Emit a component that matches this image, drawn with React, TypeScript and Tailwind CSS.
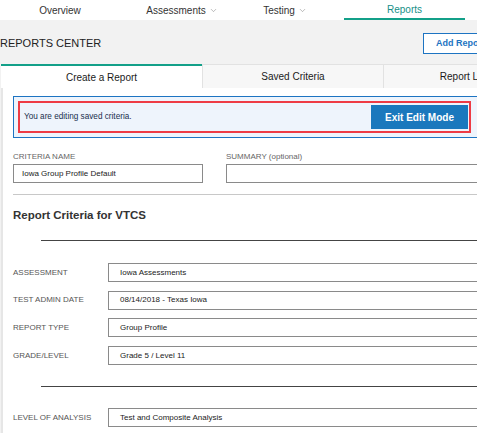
import { ChevronDown } from 'lucide-react'

type RowProps = {
  label: string
  value: string
}

function CriteriaRow({ label, value }: RowProps) {
  return (
    <div className="flex h-[19px] items-center">
      <span className="w-[95px] shrink-0 text-[8px] text-[#555]">{label}</span>
      <div className="flex h-full w-[460px] items-center border border-[#8a8a8a] bg-white pl-[11px] text-[8px] text-[#222]">
        {value}
      </div>
    </div>
  )
}

export default function App() {
  return (
    <div
      className="h-[433px] w-[477px] overflow-hidden bg-[#f2f2f2]"
      style={{ fontFamily: '"Liberation Sans", Arial, sans-serif' }}
    >
      {/* top nav */}
      <nav className="flex h-[20px] w-[600px] bg-white text-[10px] text-[#333]">
        <div className="flex w-[120px] items-center justify-center">Overview</div>
        <div className="flex w-[120px] items-center justify-center gap-[3px] pl-[4px]">
          Assessments
          <ChevronDown size={9} strokeWidth={1.5} className="text-[#888]" />
        </div>
        <div className="flex w-[88px] items-center justify-center gap-[3px] pl-[2px]">
          Testing
          <ChevronDown size={9} strokeWidth={1.5} className="text-[#888]" />
        </div>
        <div className="ml-[16px] flex w-[121px] items-center justify-center border-b-[2px] border-[#13a089] pt-[1px] text-[#178f88]">
          Reports
        </div>
      </nav>

      {/* page header */}
      <div className="flex h-[44px] w-[560px] items-center justify-between pt-[3px]">
        <h1 className="text-[11px] text-[#222]">REPORTS CENTER</h1>
        <button className="mr-[37px] h-[21px] w-[100px] border border-[#1d74c2] bg-white pl-[12px] text-left text-[9px] font-bold text-[#1d74c2]">
          Add Report
        </button>
      </div>

      <div className="ml-[1px] w-[600px]">
        {/* tabs */}
        <div className="flex h-[24px] text-[10px] text-[#1a1a1a]">
          <div className="flex w-[201px] items-center justify-center border-t-[2px] border-[#13a089] bg-white">
            Create a Report
          </div>
          <div className="flex w-[181px] items-center justify-center border-t border-l border-[#e2e2e2] bg-[#f7f7f7]">
            Saved Criteria
          </div>
          <div className="flex w-[176px] items-center justify-center border-t border-l border-[#e2e2e2] bg-[#f7f7f7]">
            Report Library
          </div>
        </div>

        {/* panel */}
        <div className="flex flex-col border-l-[2px] border-[#e6e6e6] bg-white pt-[8px] pb-[20px] pl-[10px]">
          {/* edit alert */}
          <div className="w-[560px] border border-[#1d74c2] bg-[#eef4fc] py-[4px] pl-[4px]">
            <div className="flex h-[32px] w-[453px] items-center justify-between border-[2px] border-[#ee3b45] pr-[1px] pl-[4px]">
              <span className="text-[8.2px] text-[#1a2f4d]">You are editing saved criteria.</span>
              <button className="h-[24px] w-[97px] bg-[#1a78bd] text-[10px] font-bold text-white">
                Exit Edit Mode
              </button>
            </div>
          </div>

          {/* criteria name / summary */}
          <div className="mt-[14px] flex gap-[23px]">
            <div className="flex w-[190px] flex-col gap-[2px]">
              <span className="text-[8px] leading-[10px] text-[#666]">CRITERIA NAME</span>
              <div className="flex h-[19px] items-center border border-[#8a8a8a] pl-[8px] text-[8px] text-[#222]">
                Iowa Group Profile Default
              </div>
            </div>
            <div className="flex w-[300px] flex-col gap-[2px]">
              <span className="text-[8px] leading-[10px] text-[#666]">SUMMARY (optional)</span>
              <div className="h-[19px] border border-[#8a8a8a]" />
            </div>
          </div>

          <div className="mt-[11px] h-px w-[560px] bg-[#c8c8c8]" />

          <h2 className="mt-[13px] text-[11.5px] leading-[14px] font-bold text-[#333]">
            Report Criteria for VTCS
          </h2>

          <div className="mt-[18px] ml-[28px] h-px w-[560px] bg-[#444]" />

          <div className="mt-[22px] flex flex-col gap-[8.7px]">
            <CriteriaRow label="ASSESSMENT" value="Iowa Assessments" />
            <CriteriaRow label="TEST ADMIN DATE" value="08/14/2018 - Texas Iowa" />
            <CriteriaRow label="REPORT TYPE" value="Group Profile" />
            <CriteriaRow label="GRADE/LEVEL" value="Grade 5 / Level 11" />
          </div>

          <div className="mt-[21px] ml-[28px] h-px w-[560px] bg-[#444]" />

          <div className="mt-[21px]">
            <CriteriaRow label="LEVEL OF ANALYSIS" value="Test and Composite Analysis" />
          </div>
        </div>
      </div>
    </div>
  )
}
